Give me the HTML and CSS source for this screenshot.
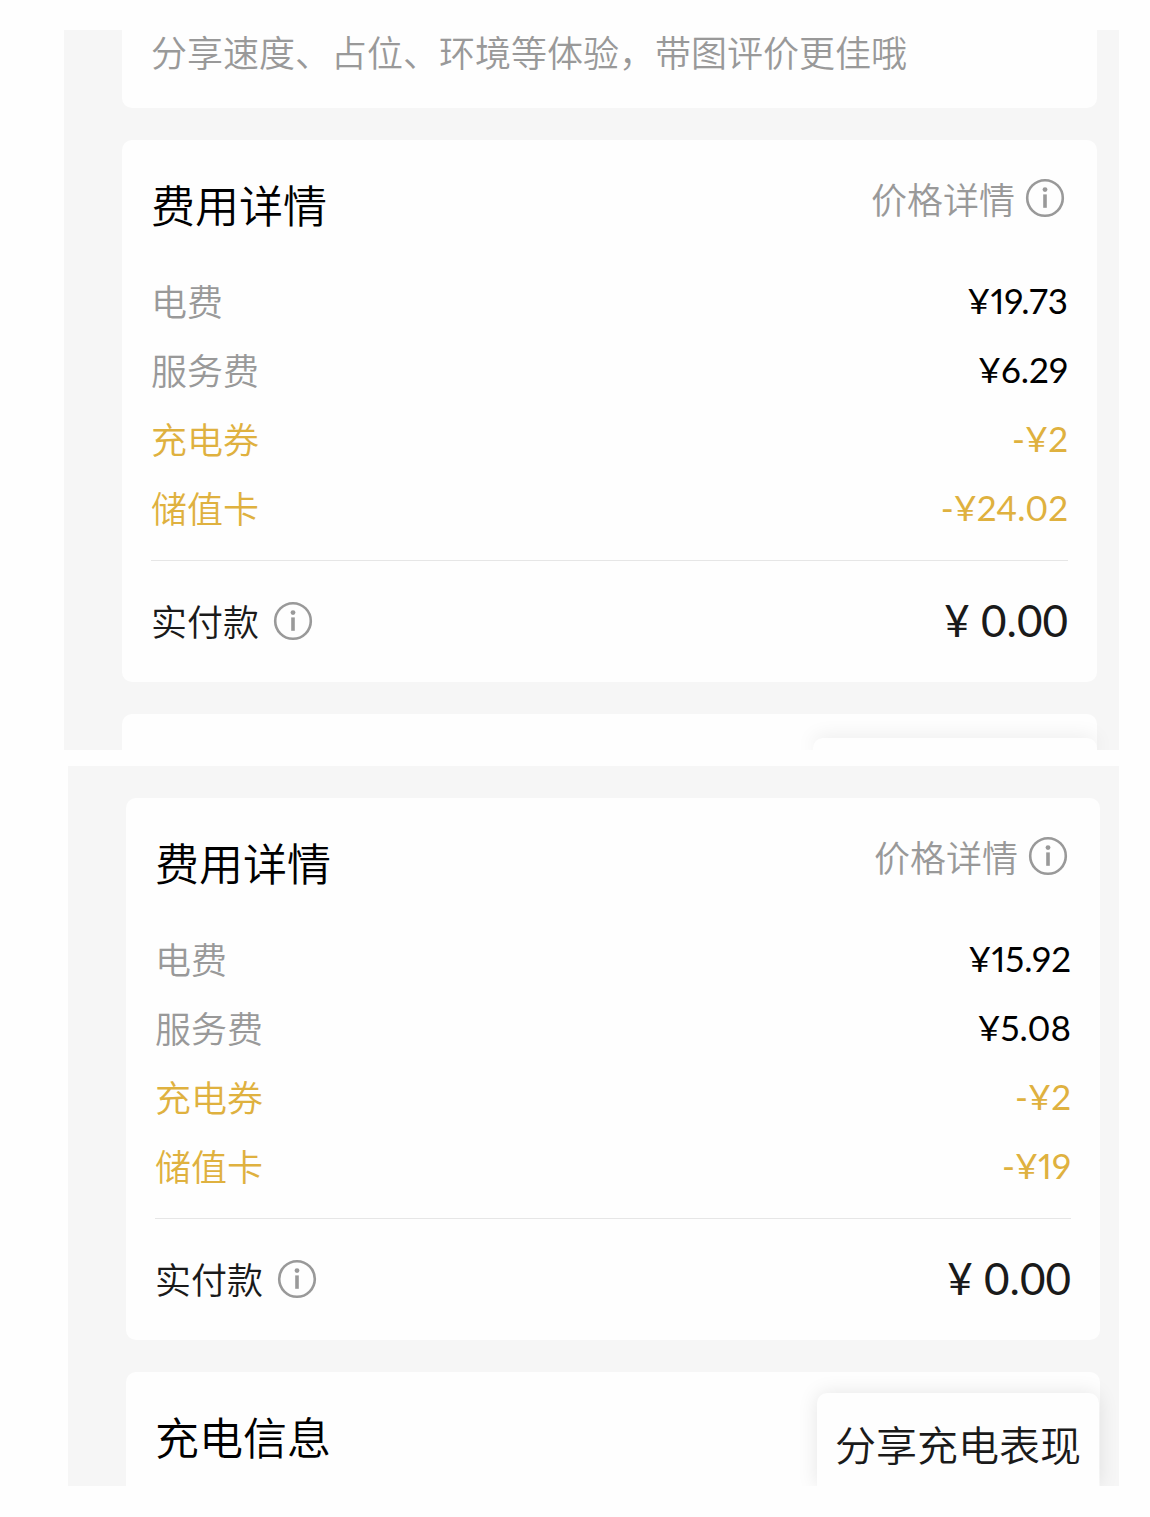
FILE: index.html
```html
<!DOCTYPE html>
<html lang="zh-CN">
<head>
<meta charset="utf-8">
<meta name="viewport" content="width=device-width, initial-scale=1">
<title>费用详情</title>
<link rel="stylesheet" href="styles.css">
</head>
<body>
<svg class="sprite" aria-hidden="true">
  <symbol id="info" viewBox="0 0 40 40">
    <circle cx="20" cy="20" r="17.8" fill="none" stroke="currentColor" stroke-width="2.6"/>
    <circle cx="20" cy="11.6" r="2.4" fill="currentColor"/>
    <rect x="18.2" y="16.4" width="3.6" height="13.4" fill="currentColor"/>
  </symbol>
</svg>
<main class="page">
  <section class="panel">
    <div class="card card-review">
      <p class="hint">分享速度、占位、环境等体验，带图评价更佳哦</p>
    </div>
    <article class="card">
      <header class="card-head">
        <h2 class="title">费用详情</h2>
        <button class="detail" type="button">价格详情<svg class="icon" aria-hidden="true"><use href="#info"/></svg></button>
      </header>
      <dl class="fees">
        <div class="fee"><dt>电费</dt><dd>¥19.73</dd></div>
        <div class="fee"><dt>服务费</dt><dd>¥6.29</dd></div>
        <div class="fee discount"><dt>充电券</dt><dd>-¥2</dd></div>
        <div class="fee discount"><dt>储值卡</dt><dd>-¥24.02</dd></div>
      </dl>
      <footer class="total">
        <span class="total-label">实付款<button class="info" type="button" aria-label="实付款说明"><svg class="icon" aria-hidden="true"><use href="#info"/></svg></button></span>
        <span class="total-value">¥ 0.00</span>
      </footer>
    </article>
    <div class="card card-peek"></div>
    <div class="overlay"><div class="share share-peek"></div></div>
  </section>

  <section class="panel panel-second">
    <article class="card">
      <header class="card-head">
        <h2 class="title">费用详情</h2>
        <button class="detail" type="button">价格详情<svg class="icon" aria-hidden="true"><use href="#info"/></svg></button>
      </header>
      <dl class="fees">
        <div class="fee"><dt>电费</dt><dd>¥15.92</dd></div>
        <div class="fee"><dt>服务费</dt><dd>¥5.08</dd></div>
        <div class="fee discount"><dt>充电券</dt><dd>-¥2</dd></div>
        <div class="fee discount"><dt>储值卡</dt><dd>-¥19</dd></div>
      </dl>
      <footer class="total">
        <span class="total-label">实付款<button class="info" type="button" aria-label="实付款说明"><svg class="icon" aria-hidden="true"><use href="#info"/></svg></button></span>
        <span class="total-value">¥ 0.00</span>
      </footer>
    </article>
    <article class="card card-charge">
      <h2 class="title">充电信息</h2>
    </article>
    <div class="overlay"><button class="share" type="button">分享充电表现</button></div>
  </section>
</main>
</body>
</html>
```
FILE: styles.css
```css
* {
  box-sizing: border-box;
  margin: 0;
  padding: 0;
}

body {
  background: #fefefe;
  color: #000;
  font-family: "Noto Sans CJK SC", sans-serif;
  font-size: 36px;
  font-weight: 350;
  line-height: 56px;
}

button {
  border: 0;
  background: none;
  color: inherit;
  font: inherit;
}

.sprite {
  position: absolute;
  width: 0;
  height: 0;
}

.page {
  display: flex;
  flex-direction: column;
  gap: 16px;
  padding: 30px 31px 30px 64px;
}

.panel {
  position: relative;
  display: flex;
  flex-direction: column;
  gap: 32px;
  padding: 0 22px 0 58px;
  background: #f6f6f6;
}

.panel-second {
  margin-left: 4px;
  padding: 32px 19px 0 58px;
}

.card {
  padding: 0 29px;
  border-radius: 10px;
  background: #fefefe;
}

.card-review {
  padding-bottom: 36px;
  border-radius: 0 0 10px 10px;
}

.hint {
  line-height: 42px;
  color: #999;
}

.card-peek {
  height: 36px;
  border-radius: 10px 10px 0 0;
}

.card-charge {
  padding-top: 30px;
  padding-bottom: 16px;
  border-radius: 10px 10px 0 0;
}

.card-head {
  display: flex;
  align-items: flex-start;
  justify-content: space-between;
  padding: 30px 0 28px;
}

.title {
  font-size: 44px;
  font-weight: 350;
  line-height: 68px;
}

.detail {
  display: flex;
  align-items: center;
  gap: 10px;
  padding-right: 3px;
  color: #999;
}

.icon {
  display: block;
  width: 40px;
  height: 40px;
  color: #999;
}

.fees {
  padding-bottom: 18px;
  border-bottom: 1px solid #e6e6e6;
}

.fee {
  display: flex;
  justify-content: space-between;
  line-height: 69px;
}

.fee dt {
  color: #999;
}

.fee dd,
.total-value {
  font-family: Lato, "Noto Sans CJK SC", sans-serif;
  font-weight: 400;
}

.fee dd {
  font-size: 35px;
  font-variant-numeric: proportional-nums;
}

.fee.discount,
.fee.discount dt {
  color: #dfb13f;
}

.total {
  display: flex;
  align-items: center;
  justify-content: space-between;
  padding: 29px 0 31px;
  line-height: 61px;
  color: #1a1a1a;
}

.total-label {
  display: flex;
  align-items: center;
  gap: 14px;
}

.total-value {
  font-size: 44px;
}

.overlay {
  position: absolute;
  inset: 0;
  overflow: hidden;
  pointer-events: none;
}

.share {
  position: absolute;
  right: 20px;
  bottom: 0;
  padding: 20px 18px 12px;
  border-radius: 10px 10px 0 0;
  background: #fefefe;
  box-shadow: 0 0 20px rgba(0, 0, 0, 0.1);
  color: #1a1a1a;
  font-size: 41px;
  line-height: 61px;
  pointer-events: auto;
}

.share-peek {
  right: 22px;
  width: 284px;
  height: 12px;
  padding: 0;
}
```
